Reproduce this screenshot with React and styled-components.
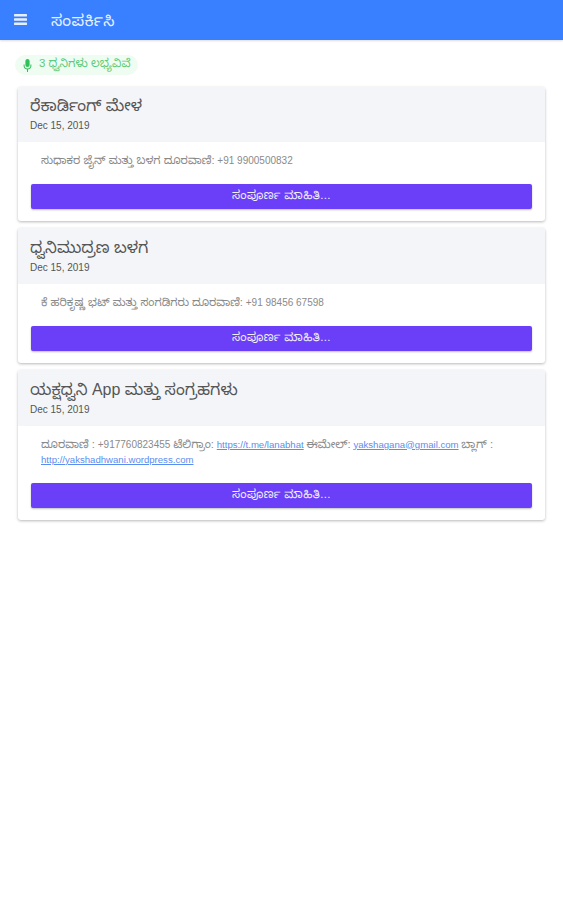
import React from 'react';
import styled, { createGlobalStyle } from 'styled-components';

const FONT = `"Liberation Sans", "Noto Sans Kannada", "Noto Sans", sans-serif`;

const GlobalStyle = createGlobalStyle`
  html, body { margin: 0; padding: 0; background: #fff; }
  body { font-family: ${FONT}; }
`;

const Page = styled.div`
  width: 563px;
  height: 900px;
  overflow: hidden;
  background: #fff;
`;

const Toolbar = styled.header`
  height: 39.5px;
  background: #3880ff;
  display: flex;
  align-items: center;
  padding: 0 14px;
  gap: 24px;
  color: #fff;
  box-shadow: 0 1px 2px rgba(0, 0, 0, 0.14);
`;

const MenuIcon = styled.svg`
  flex: none;
  width: 13px;
  height: 11px;
  fill: #e8f0ff;
`;

const Title = styled.h1`
  margin: 0;
  padding-top: 3px;
  font-size: 16px;
  line-height: 20px;
  font-weight: 400;
  letter-spacing: 0.4px;
  color: #e8f0ff;
`;

const Content = styled.main`
  padding: 15.5px 18px 0;
  display: flex;
  flex-direction: column;
  align-items: stretch;
`;

const Chip = styled.div`
  align-self: flex-start;
  margin-left: -3px;
  margin-bottom: 11.8px;
  height: 20px;
  width: 123px;
  box-sizing: border-box;
  padding-left: 8px;
  display: flex;
  align-items: center;
  gap: 7px;
  border-radius: 10px;
  background: #effcf2;
  color: #5ccb7e;
  font-size: 11.5px;
  white-space: nowrap;
`;

const MicIcon = styled.svg`
  flex: none;
  width: 9px;
  height: 13px;
  fill: #2fbf5b;
`;

const Card = styled.article`
  margin-bottom: 7.2px;
  border-radius: 3px;
  background: #fff;
  box-shadow: 0 1px 3px rgba(0, 0, 0, 0.28);
  overflow: hidden;
`;

const CardHead = styled.div`
  height: 55.5px;
  box-sizing: border-box;
  padding: 8.5px 12px 0;
  background: #f4f5f8;
`;

const CardTitle = styled.h2`
  margin: 0;
  font-size: 16px;
  line-height: 21px;
  font-weight: 400;
  color: #555;
`;

const CardDate = styled.div`
  margin-top: 3px;
  font-size: 10px;
  line-height: 13px;
  color: #555;
`;

const CardBody = styled.div`
  padding: 11px 13px 12px;
`;

const Text = styled.p`
  margin: 0 10px 16px;
  font-size: 10px;
  line-height: 15px;
  color: #8a8a8a;
`;

const Kannada = styled.span`
  font-size: 11.2px;
`;

const Link = styled.a`
  font-size: 9.6px;
  color: #5b8def;
  text-decoration: underline;
`;

const MoreButton = styled.button`
  display: block;
  width: 100%;
  height: 25px;
  padding: 1px 0 0;
  border: 0;
  border-radius: 2px;
  background: #6b3ff7;
  color: #f3efff;
  font-family: inherit;
  font-size: 11.5px;
  font-weight: 400;
  letter-spacing: 0.4px;
  box-shadow: 0 1px 2px rgba(0, 0, 0, 0.25);
`;

const cards = [
  {
    title: 'ರೆಕಾರ್ಡಿಂಗ್ ಮೇಳ',
    body: (
      <>
        <Kannada>ಸುಧಾಕರ ಜೈನ್ ಮತ್ತು ಬಳಗ ದೂರವಾಣಿ:</Kannada> +91 9900500832
      </>
    ),
  },
  {
    title: 'ಧ್ವನಿಮುದ್ರಣ ಬಳಗ',
    body: (
      <>
        <Kannada>ಕೆ ಹರಿಕೃಷ್ಣ ಭಟ್ ಮತ್ತು ಸಂಗಡಿಗರು ದೂರವಾಣಿ:</Kannada> +91 98456 67598
      </>
    ),
  },
  {
    title: 'ಯಕ್ಷಧ್ವನಿ App ಮತ್ತು ಸಂಗ್ರಹಗಳು',
    body: (
      <>
        <Kannada>ದೂರವಾಣಿ :</Kannada> +917760823455 <Kannada>ಟೆಲಿಗ್ರಾಂ:</Kannada>{' '}
        <Link href="#">https://t.me/lanabhat</Link> <Kannada>ಈಮೇಲ್:</Kannada>{' '}
        <Link href="#">yakshagana@gmail.com</Link> <Kannada>ಬ್ಲಾಗ್ :</Kannada>{' '}
        <Link href="#">http://yakshadhwani.wordpress.com</Link>
      </>
    ),
  },
];

export default function App() {
  return (
    <Page>
      <GlobalStyle />
      <Toolbar>
        <MenuIcon viewBox="0 0 13 11">
          <rect y="0" width="13" height="2.4" rx="0.4" />
          <rect y="4.3" width="13" height="2.4" rx="0.4" />
          <rect y="8.6" width="13" height="2.4" rx="0.4" />
        </MenuIcon>
        <Title>ಸಂಪರ್ಕಿಸಿ</Title>
      </Toolbar>
      <Content>
        <Chip>
          <MicIcon viewBox="0 0 9 13">
            <rect x="2.4" y="0" width="4.2" height="8" rx="2.1" />
            <path d="M0.6 5.6h1v0.9a2.9 2.9 0 0 0 5.8 0V5.6h1v0.9a3.9 3.9 0 0 1-3.4 3.9V13H4V10.4A3.9 3.9 0 0 1 0.6 6.5z" />
          </MicIcon>
          3 ಧ್ವನಿಗಳು ಲಭ್ಯವಿವೆ
        </Chip>
        {cards.map((card) => (
          <Card key={card.title}>
            <CardHead>
              <CardTitle>{card.title}</CardTitle>
              <CardDate>Dec 15, 2019</CardDate>
            </CardHead>
            <CardBody>
              <Text>{card.body}</Text>
              <MoreButton>ಸಂಪೂರ್ಣ ಮಾಹಿತಿ...</MoreButton>
            </CardBody>
          </Card>
        ))}
      </Content>
    </Page>
  );
}
